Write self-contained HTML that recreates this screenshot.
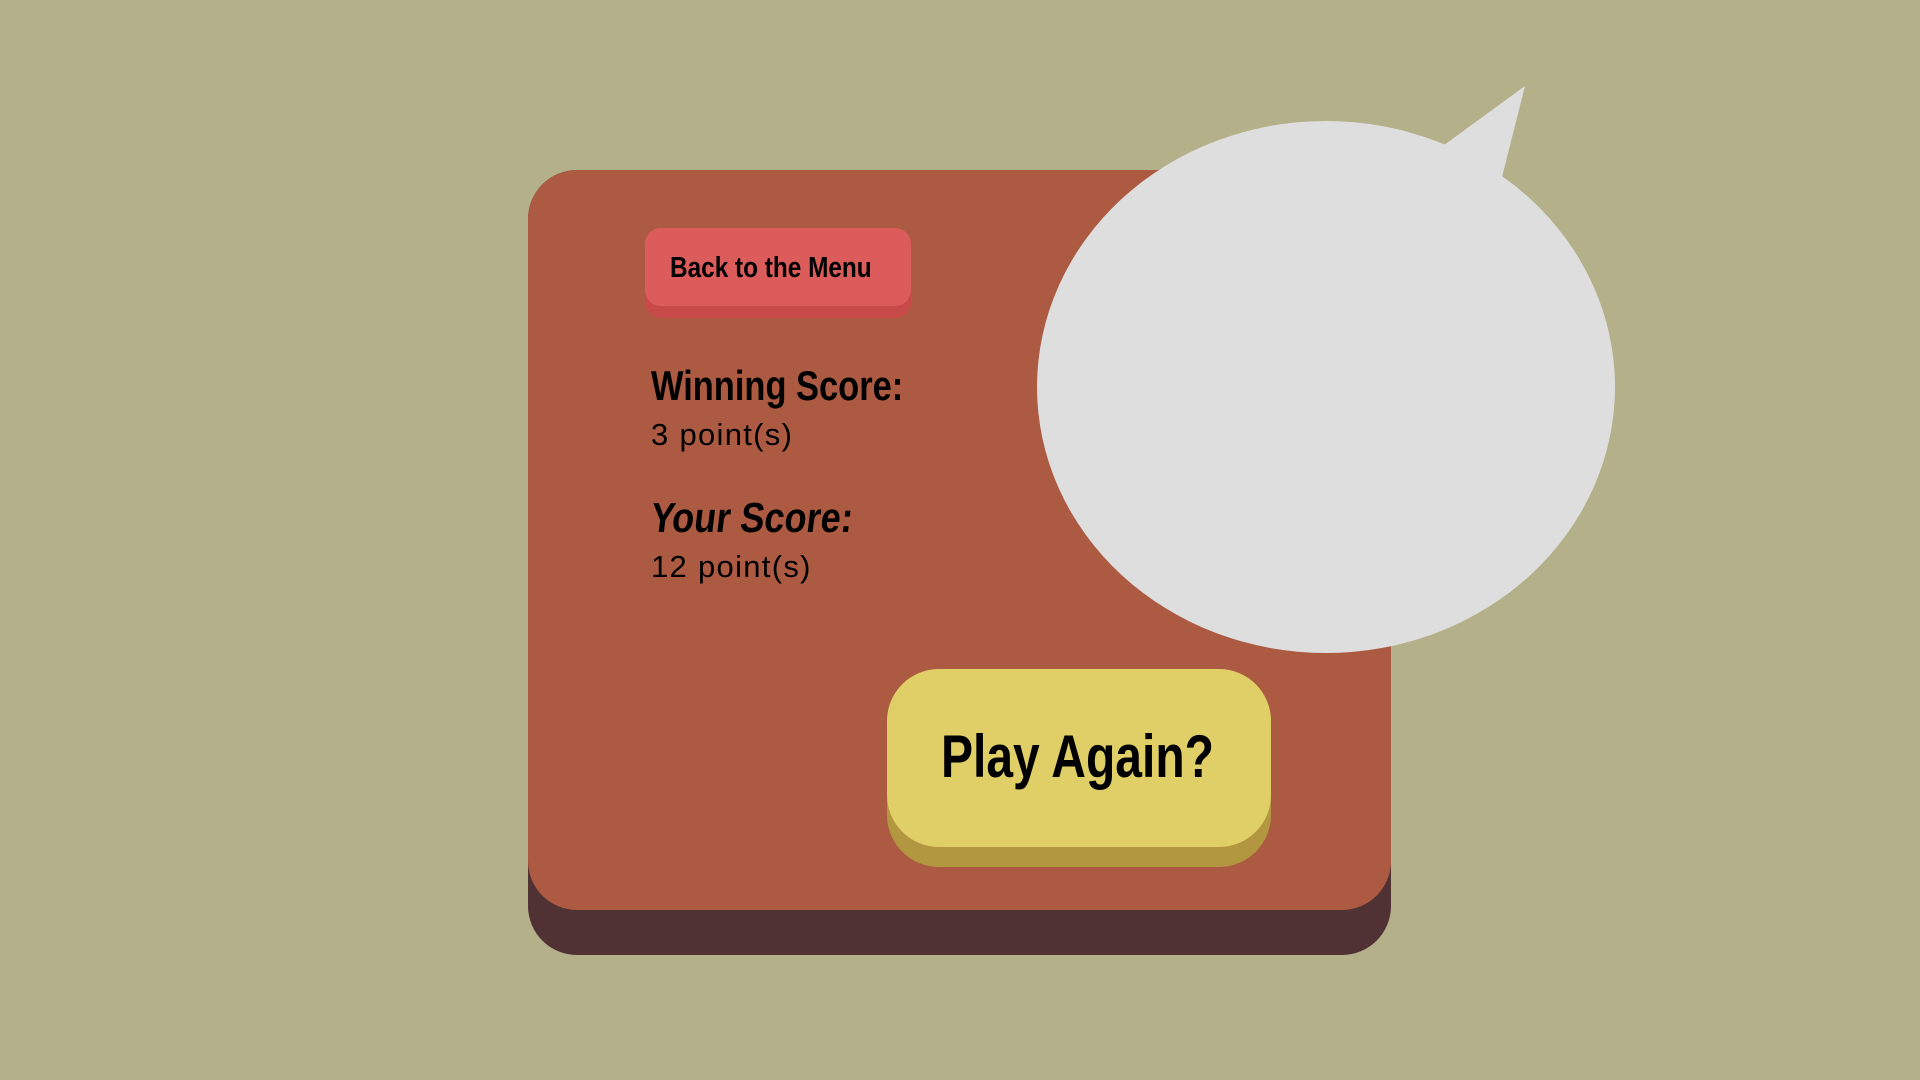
<!DOCTYPE html>
<html><head><style>
html,body{margin:0;padding:0;width:1920px;height:1080px;overflow:hidden;background:#b4b08a;font-family:"Liberation Sans",sans-serif;}
.abs{position:absolute}
.h{font-weight:bold;transform-origin:left center;transform:scaleX(0.82);white-space:nowrap;color:#000}
.p{font-size:31px;letter-spacing:1.3px;color:#000;white-space:nowrap}
</style></head><body>
<div class="abs" style="left:528px;top:170px;width:863px;height:785px;background:#503234;border-radius:49px"></div>
<div class="abs" style="left:528px;top:170px;width:863px;height:740px;background:#ac5a41;border-radius:49px"></div>
<div class="abs" style="left:645px;top:228px;width:266px;height:90px;background:#c84a48;border-radius:16px"></div>
<div class="abs" style="left:645px;top:228px;width:266px;height:78px;background:#dc5c5c;border-radius:16px"></div>
<div class="abs h" style="left:670px;top:250px;font-size:29px;line-height:36px;transform:scaleX(0.84)">Back to the Menu</div>
<div class="abs h" style="left:651px;top:361px;font-size:42px;line-height:50px">Winning Score:</div>
<div class="abs p" style="left:651px;top:417px;line-height:36px">3 point(s)</div>
<div class="abs h" style="left:651px;top:493px;font-size:42px;line-height:50px;transform:scaleX(0.86) skewX(-8deg)">Your Score:</div>
<div class="abs p" style="left:651px;top:549px;line-height:36px">12 point(s)</div>
<div class="abs" style="left:887px;top:669px;width:384px;height:198px;background:#b39640;border-radius:52px"></div>
<div class="abs" style="left:887px;top:669px;width:384px;height:178px;background:#e0cf66;border-radius:52px"></div>
<div class="abs h" style="left:941px;top:722px;font-size:60px;line-height:70px;transform:scaleX(0.80)">Play Again?</div>
<svg class="abs" style="left:0;top:0" width="1920" height="1080">
<ellipse cx="1326" cy="387" rx="289" ry="266" fill="#dedede"/>
<polygon points="1440,148 1525,86 1500,185" fill="#dedede"/>
</svg>
</body></html>
